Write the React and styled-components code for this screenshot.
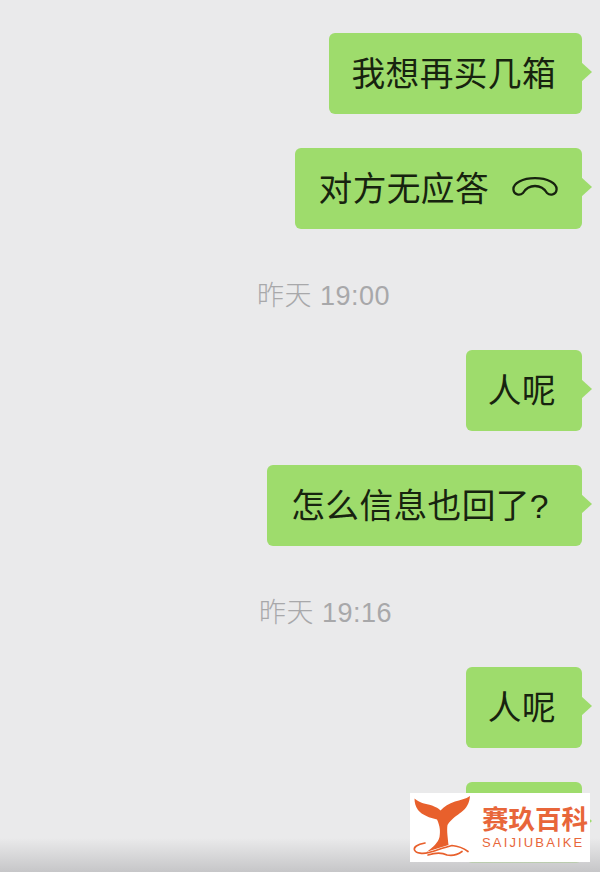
import React from 'react';
import styled, { createGlobalStyle } from 'styled-components';

const GlobalStyle = createGlobalStyle`
  html, body { margin: 0; padding: 0; height: 100%; overflow: hidden; background: #eaeaeb; }
`;

const Page = styled.div`
  position: relative;
  width: 600px;
  height: 872px;
  overflow: hidden;
  background: #eaeaeb;
  font-family: "Liberation Sans", "Noto Sans CJK SC", sans-serif;
`;

const Thread = styled.div`
  display: flex;
  flex-direction: column;
  align-items: flex-end;
  padding: 33px 18px 0 0;
`;

const Bubble = styled.div`
  position: relative;
  display: flex;
  align-items: center;
  justify-content: flex-end;
  box-sizing: border-box;
  flex-shrink: 0;
  width: ${p => p.$width}px;
  height: 81px;
  margin-bottom: ${p => p.$gap ?? 34}px;
  padding: 0 ${p => p.$right ?? 26}px 5px 0;
  border-radius: 6px;
  background: #9edc6c;
  color: #17230f;
  font-size: 33.7px;
  letter-spacing: 0.4px;
  white-space: nowrap;

  &::after {
    content: '';
    position: absolute;
    right: -10px;
    top: 29px;
    width: 11px;
    height: 20px;
    background: #9edc6c;
    clip-path: polygon(0 0, 100% 50%, 0 100%);
  }
`;

const TimeLabel = styled.div`
  align-self: flex-start;
  margin-left: ${p => p.$left}px;
  margin-bottom: ${p => p.$gap}px;
  height: 34px;
  line-height: 34px;
  font-size: 27px;
  font-weight: 300;
  letter-spacing: 0.5px;
  color: #a8a8aa;
  white-space: nowrap;
`;

const CallIcon = styled.svg`
  flex-shrink: 0;
  margin-left: 23px;
  margin-top: 2px;
  width: 46px;
  height: 20px;
`;

const Fade = styled.div`
  position: absolute;
  left: 0;
  right: 0;
  bottom: 0;
  height: 34px;
  background: linear-gradient(rgba(198, 198, 200, 0), rgba(198, 198, 200, 1));
`;

const Watermark = styled.div`
  position: absolute;
  left: 410px;
  top: 793px;
  display: flex;
  align-items: center;
  width: 180px;
  height: 69px;
  background: #fff;
`;

const WhaleTail = styled.svg`
  flex-shrink: 0;
  width: 64px;
  height: 69px;
`;

const Brand = styled.div`
  display: flex;
  flex-direction: column;
  margin-left: 8px;
  color: #e8663a;
`;

const BrandName = styled.div`
  font-size: 26.5px;
  line-height: 30px;
  font-weight: 700;
  white-space: nowrap;
`;

const BrandLatin = styled.div`
  font-size: 13px;
  line-height: 15px;
  letter-spacing: 2.15px;
  white-space: nowrap;
`;

const App = () => (
  <Page>
    <GlobalStyle />
    <Thread>
      <Bubble $width={253}>我想再买几箱</Bubble>
      <Bubble $width={287} $gap={50} $right={24}>
        对方无应答
        <CallIcon viewBox="0 0 46 20" fill="none" stroke="#17230f" strokeWidth="2.3" strokeLinejoin="round">
          <path d="M1.5 13 C0.5 6 11 1.2 23 1.2 C35 1.2 45.5 6 44.5 13 C44 18 38 18.8 35 16 C32 11 28 9 23 9 C18 9 14 11 11 16 C8 18.8 2 18 1.5 13 Z" />
        </CallIcon>
      </Bubble>
      <TimeLabel $left={257} $gap={37}>昨天 19:00</TimeLabel>
      <Bubble $width={116}>人呢</Bubble>
      <Bubble $width={315} $gap={50} $right={33}>怎么信息也回了?</Bubble>
      <TimeLabel $left={259} $gap={37}>昨天 19:16</TimeLabel>
      <Bubble $width={116}>人呢</Bubble>
      <Bubble $width={116} />
    </Thread>
    <Fade />
    <Watermark>
      <WhaleTail viewBox="0 0 64 69">
        <path fill="#e8602c" d="M4.5 5.5 C11 11 15 10 22 12.5 C26 14 28.5 15.5 30.5 17.5 C34 13.5 39 10.5 45 8.5 C50 7 56 6 60 3 C59.5 10 56.5 15.5 51.5 19 C47 22.5 41 26 37.5 32 C36.5 38 38 46 38.5 52 C31 54 23 57 16.5 59 C23 54 28 50 29.5 44 C30.5 38 30 33 27 26.5 C20 25 12 22 8 17 C5.5 13.5 4.5 9.5 4.5 5.5 Z" />
        <path fill="none" stroke="#e8602c" strokeWidth="1.7" strokeLinecap="round" d="M15 50 C7 51.5 3.5 54 4.5 57 C6 60.5 13 61 19 59.5 C26 57.5 34 54.5 42 52.5 C48 53 54 55.5 58 58.5" />
        <path fill="none" stroke="#e8602c" strokeWidth="1.7" strokeLinecap="round" d="M18 62 C26 59.5 33 60 37 62 C42 63 48 61.5 52 58.5" />
      </WhaleTail>
      <Brand>
        <BrandName>赛玖百科</BrandName>
        <BrandLatin>SAIJIUBAIKE</BrandLatin>
      </Brand>
    </Watermark>
  </Page>
);

export default App;
